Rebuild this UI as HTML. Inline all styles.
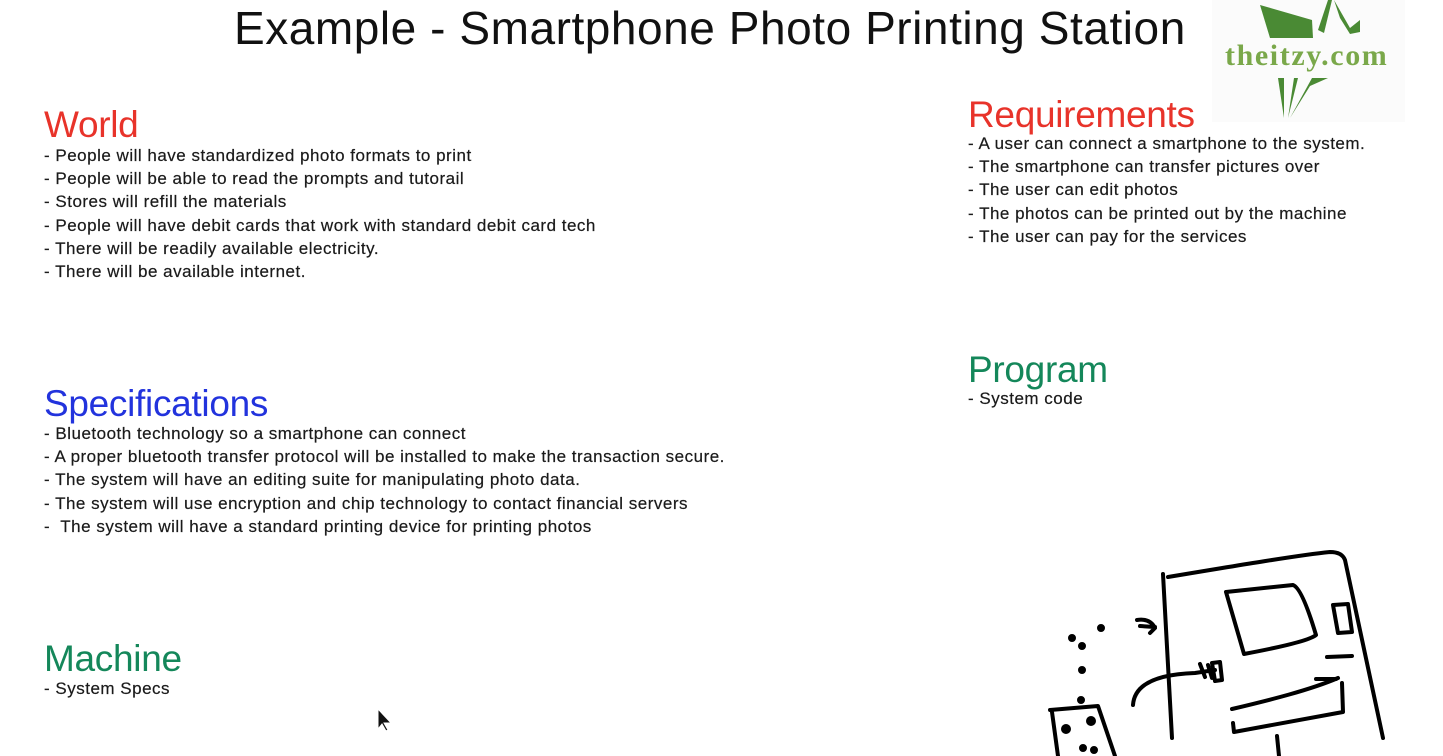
<!DOCTYPE html>
<html><head><meta charset="utf-8"><style>
body{margin:0;width:1443px;height:756px;background:#fff;position:relative;overflow:hidden;font-family:"Liberation Sans",sans-serif;color:#222}
h1{position:absolute;margin:0;left:234px;top:1px;font-weight:normal;font-size:46px;letter-spacing:0.55px;color:#111}
.h{position:absolute;margin:0;font-weight:normal;font-size:37px;letter-spacing:-0.3px}
.l{position:absolute;font-size:17px;line-height:23.2px;letter-spacing:0.5px;white-space:pre;color:#1a1a1a;-webkit-text-stroke:0.2px #1a1a1a}
.r{color:#e8332a}.b{color:#2233dd}.g{color:#14875a}
</style></head><body>
<h1>Example - Smartphone Photo Printing Station</h1>

<div class="h r" style="left:44px;top:104px">World</div>
<div class="l" style="left:44px;top:144px">- People will have standardized photo formats to print
- People will be able to read the prompts and tutorail
- Stores will refill the materials
- People will have debit cards that work with standard debit card tech
- There will be readily available electricity.
- There will be available internet.</div>

<div class="h b" style="left:44px;top:383px">Specifications</div>
<div class="l" style="left:44px;top:422px">- Bluetooth technology so a smartphone can connect
- A proper bluetooth transfer protocol will be installed to make the transaction secure.
- The system will have an editing suite for manipulating photo data.
- The system will use encryption and chip technology to contact financial servers
-  The system will have a standard printing device for printing photos</div>

<div class="h g" style="left:44px;top:638px">Machine</div>
<div class="l" style="left:44px;top:677px">- System Specs</div>

<div class="h r" style="left:968px;top:94px">Requirements</div>
<div class="l" style="left:968px;top:132px">- A user can connect a smartphone to the system.
- The smartphone can transfer pictures over
- The user can edit photos
- The photos can be printed out by the machine
- The user can pay for the services</div>

<div class="h g" style="left:968px;top:349px">Program</div>
<div class="l" style="left:968px;top:387px">- System code</div>

<div style="position:absolute;left:1212px;top:0;width:193px;height:122px;background:#fbfbfb"></div>
<svg style="position:absolute;left:1200px;top:0" width="243" height="130">
<polygon points="60,5 112,20 113,38 70,38" fill="#4a8a34"/>
<polygon points="118,30 128,0 132,0 124,33" fill="#4a8a34"/>
<polygon points="134,0 150,28 160,20 160,32 150,34 140,18" fill="#4a8a34"/>
<polygon points="78,78 84,78 84,118" fill="#4a8a34"/>
<polygon points="88,118 94,78 98,78" fill="#4a8a34"/>
<polygon points="90,118 112,78 128,78 110,86" fill="#4a8a34"/>
<text x="25" y="65" font-family="Liberation Serif,serif" font-weight="bold" font-size="30" letter-spacing="1.6" fill="#7aa84a">theitzy.com</text>
</svg>

<svg style="position:absolute;left:370px;top:705px" width="20" height="28"><polygon points="8,4 8,24 12,19 16,26 18,25 14,18 21,18" fill="#111" stroke="#fff" stroke-width="1"/></svg>

<svg style="position:absolute;left:1040px;top:540px" width="403" height="216" fill="none" stroke="#000" stroke-width="4" stroke-linecap="round" stroke-linejoin="round">
<path d="M123,34 L132,198"/>
<path d="M128,37 C200,25 260,15 290,12 Q302,12 305,20 L343,198"/>
<path d="M186,52 L253,45 Q262,48 276,95 Q268,102 204,114 L186,52"/>
<path d="M293,65 L308,64 L312,92 L298,93 Z"/>
<path d="M287,117 L312,116"/>
<path d="M276,139 L296,139"/>
<path d="M192,169 C230,160 270,150 298,138"/>
<path d="M302,143 L303,172 L194,192 L193,183"/>
<path d="M237,196 L239,216"/>
<path d="M93,165 Q95,135 155,133 L175,130"/>
<path d="M160,124 L165,137 M168,125 L172,138"/>
<path d="M172,123 L180,122 L182,140 L175,141 Z"/>
<path d="M97,80 Q110,78 115,88 L110,93 M100,86 L115,87"/>
<path d="M10,170 L58,166 L75,216 M12,172 L18,216"/>
<circle cx="32" cy="98" r="2" fill="#000"/><circle cx="61" cy="88" r="2" fill="#000"/>
<circle cx="42" cy="106" r="2" fill="#000"/><circle cx="42" cy="130" r="2" fill="#000"/>
<circle cx="41" cy="160" r="2" fill="#000"/>
<circle cx="26" cy="189" r="3" fill="#000"/><circle cx="51" cy="181" r="3" fill="#000"/>
<circle cx="43" cy="208" r="2" fill="#000"/><circle cx="54" cy="210" r="2" fill="#000"/>
</svg>
</body></html>
